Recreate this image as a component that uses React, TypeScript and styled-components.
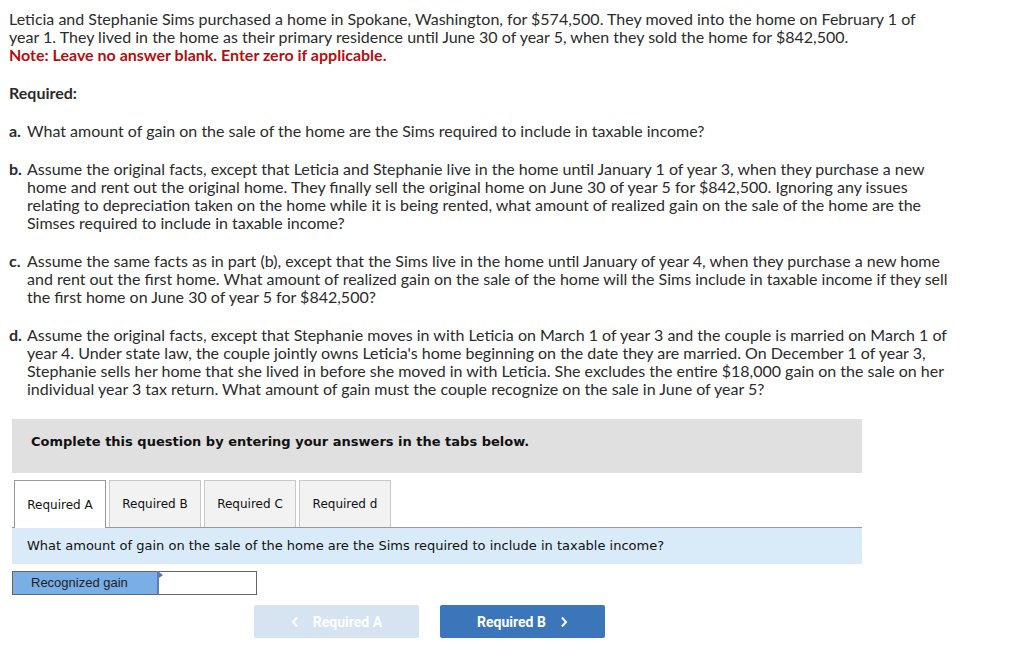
import styled, { createGlobalStyle } from "styled-components";

const Global = createGlobalStyle`
  body {
    margin: 0;
    background: #fff;
  }
`;

const Page = styled.div`
  padding: 10px 9px 20px 9px;
  width: 1013px;
  font-family: Lato, "Open Sans", sans-serif;
  font-size: 16px;
  line-height: 18px;
  color: #2b2b2b;
`;

const Para = styled.p`
  margin: 0;
  white-space: nowrap;
`;

const Note = styled.span`
  color: #b30f0f;
  font-weight: bold;
`;

const Heading = styled.p`
  margin: 20px 0 20px;
  font-weight: bold;
`;

const Part = styled.p`
  margin: 0 0 20px;
  padding-left: 18px;
  text-indent: -18px;
  white-space: nowrap;
`;

const Letter = styled.b`
  display: inline-block;
  width: 18px;
  text-indent: 0;
`;

const Panel = styled.div`
  margin: 21px 0 0 3px;
  width: 850px;
  font-family: "DejaVu Sans", Verdana, sans-serif;
`;

const Banner = styled.div`
  background: #e0e0e0;
  height: 54px;
  box-sizing: border-box;
  display: flex;
  align-items: center;
  padding: 0 0 8px 19px;
  font-size: 13px;
  font-weight: bold;
  color: #111;
`;

const Tabs = styled.div`
  display: flex;
  gap: 3px;
  margin-top: 7px;
  padding-left: 2px;
  border-bottom: 1px solid #999;
`;

const Tab = styled.div<{ $active?: boolean }>`
  width: 92px;
  box-sizing: border-box;
  display: flex;
  align-items: center;
  justify-content: center;
  font-size: 12px;
  color: #111;
  background: ${(p) => (p.$active ? "#fff" : "#f2f2f2")};
  border: 1px solid ${(p) => (p.$active ? "#999" : "#c8c8c8")};
  border-bottom: none;
  margin-bottom: ${(p) => (p.$active ? "-1px" : "0")};
  height: ${(p) => (p.$active ? "48px" : "47px")};
`;

const Question = styled.div`
  background: #d9ebf9;
  height: 36px;
  display: flex;
  align-items: center;
  padding-left: 15px;
  font-size: 13px;
  color: #111;
`;

const AnswerRow = styled.div`
  display: flex;
  margin-top: 7px;
  height: 24px;
`;

const Label = styled.div`
  width: 145px;
  box-sizing: border-box;
  background: #7aaee6;
  border: 1px solid #666;
  border-right: none;
  display: flex;
  align-items: center;
  padding-left: 18px;
  font-family: "Liberation Sans", Arial, sans-serif;
  font-size: 13px;
  color: #222;
`;

const InputWrap = styled.div`
  position: relative;
  width: 100px;
  box-sizing: border-box;
  border: 1px solid #666;
  border-left: 2px solid #5b7fb5;
  background: #fff;
`;

const Marker = styled.span`
  position: absolute;
  top: 0;
  left: 0;
  width: 0;
  height: 0;
  border-top: 3px solid transparent;
  border-bottom: 3px solid transparent;
  border-left: 4px solid #4a7bc0;
`;

const Input = styled.input`
  width: 100%;
  height: 100%;
  box-sizing: border-box;
  border: none;
  outline: none;
  background: transparent;
`;

const Nav = styled.div`
  display: flex;
  gap: 21px;
  margin: 10px 0 0 242px;
`;

const NavButton = styled.button<{ $disabled?: boolean }>`
  width: 165px;
  height: 33px;
  border: none;
  border-radius: 2px;
  background: ${(p) => (p.$disabled ? "#d6e3f1" : "#3a76b9")};
  color: #fff;
  font-family: Roboto, "Liberation Sans", sans-serif;
  font-weight: bold;
  font-size: 14px;
  display: flex;
  align-items: center;
  justify-content: center;
  gap: 14px;
  cursor: ${(p) => (p.$disabled ? "default" : "pointer")};
`;

const Chevron = ({ dir }: { dir: "left" | "right" }) => (
  <svg width="8" height="12" viewBox="0 0 8 12">
    <path
      d={dir === "left" ? "M6 1.5 L2 6 L6 10.5" : "M2 1.5 L6 6 L2 10.5"}
      fill="none"
      stroke="#fff"
      strokeWidth="2"
    />
  </svg>
);

export default function App() {
  return (
    <>
      <Global />
      <Page>
        <Para>
          Leticia and Stephanie Sims purchased a home in Spokane, Washington, for $574,500. They moved into the home on February 1 of
          <br />
          year 1. They lived in the home as their primary residence until June 30 of year 5, when they sold the home for $842,500.
          <br />
          <Note>Note: Leave no answer blank. Enter zero if applicable.</Note>
        </Para>
        <Heading>Required:</Heading>
        <Part>
          <Letter>a.</Letter>What amount of gain on the sale of the home are the Sims required to include in taxable income?
        </Part>
        <Part>
          <Letter>b.</Letter>Assume the original facts, except that Leticia and Stephanie live in the home until January 1 of year 3, when they purchase a new
          <br />
          home and rent out the original home. They finally sell the original home on June 30 of year 5 for $842,500. Ignoring any issues
          <br />
          relating to depreciation taken on the home while it is being rented, what amount of realized gain on the sale of the home are the
          <br />
          Simses required to include in taxable income?
        </Part>
        <Part>
          <Letter>c.</Letter>Assume the same facts as in part (b), except that the Sims live in the home until January of year 4, when they purchase a new home
          <br />
          and rent out the first home. What amount of realized gain on the sale of the home will the Sims include in taxable income if they sell
          <br />
          the first home on June 30 of year 5 for $842,500?
        </Part>
        <Part>
          <Letter>d.</Letter>Assume the original facts, except that Stephanie moves in with Leticia on March 1 of year 3 and the couple is married on March 1 of
          <br />
          year 4. Under state law, the couple jointly owns Leticia's home beginning on the date they are married. On December 1 of year 3,
          <br />
          Stephanie sells her home that she lived in before she moved in with Leticia. She excludes the entire $18,000 gain on the sale on her
          <br />
          individual year 3 tax return. What amount of gain must the couple recognize on the sale in June of year 5?
        </Part>
        <Panel>
          <Banner>Complete this question by entering your answers in the tabs below.</Banner>
          <Tabs>
            <Tab $active>Required A</Tab>
            <Tab>Required B</Tab>
            <Tab>Required C</Tab>
            <Tab>Required d</Tab>
          </Tabs>
          <Question>What amount of gain on the sale of the home are the Sims required to include in taxable income?</Question>
          <AnswerRow>
            <Label>Recognized gain</Label>
            <InputWrap>
              <Marker />
              <Input />
            </InputWrap>
          </AnswerRow>
          <Nav>
            <NavButton $disabled>
              <Chevron dir="left" />
              Required A
            </NavButton>
            <NavButton>
              Required B
              <Chevron dir="right" />
            </NavButton>
          </Nav>
        </Panel>
      </Page>
    </>
  );
}
